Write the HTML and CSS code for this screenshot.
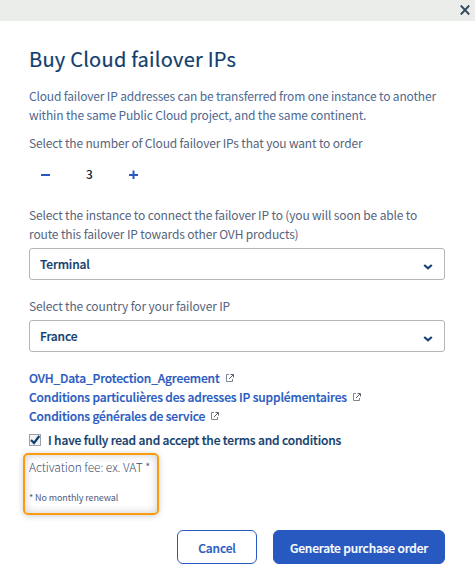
FILE: index.html
```html
<!DOCTYPE html>
<html lang="en">
<head>
<meta charset="utf-8">
<title>Buy Cloud failover IPs</title>
<link rel="stylesheet" href="styles.css">
</head>
<body>
<svg class="defs" width="0" height="0" aria-hidden="true">
  <symbol id="ext" viewBox="0 0 10 10"><path d="M4 1.5H1.5V8.5H7.5V6" fill="none" stroke="#7d8792" stroke-width="1"/><path d="M4 6 8 2M5.5 1.5H8.5V4.5" fill="none" stroke="#59606b" stroke-width="1"/></symbol>
  <symbol id="chev" viewBox="0 0 10 6"><path d="M1.2 1 5 4.3 8.8 1" fill="none" stroke="#174276" stroke-width="2.2"/></symbol>
</svg>
<header class="topbar"><svg class="close" viewBox="0 0 10 10"><path d="M.8.5 9.2 9.5M9.2.5.8 9.5" stroke="#34495e" stroke-width="1.9"/></svg></header>
<main class="dialog">
  <h1 class="title">Buy Cloud failover IPs</h1>
  <p class="text intro">Cloud failover IP addresses can be transferred from one instance to another<br>within the same Public Cloud project, and the same continent.</p>
  <p class="text label quantity-label">Select the number of Cloud failover IPs that you want to order</p>
  <div class="stepper"><svg class="sign" viewBox="0 0 9 9"><path d="M0 5H9" stroke="#2859c0" stroke-width="2"/></svg><span class="count">3</span><svg class="sign" viewBox="0 0 9 9"><path d="M0 5H9M4.5 .5V9" stroke="#2859c0" stroke-width="2"/></svg></div>
  <p class="text label instance-label">Select the instance to connect the failover IP to (you will soon be able to<br>route this failover IP towards other OVH products)</p>
  <div class="select"><span>Terminal</span><svg class="chev"><use href="#chev"/></svg></div>
  <p class="text label country-label">Select the country for your failover IP</p>
  <div class="select"><span>France</span><svg class="chev"><use href="#chev"/></svg></div>
  <div class="links">
    <a class="link"><span>OVH_Data_Protection_Agreement</span><svg class="ext"><use href="#ext"/></svg></a>
    <a class="link"><span>Conditions particulières des adresses IP supplémentaires</span><svg class="ext"><use href="#ext"/></svg></a>
    <a class="link"><span>Conditions générales de service</span><svg class="ext"><use href="#ext"/></svg></a>
  </div>
  <div class="terms"><span class="box"><svg class="tick" viewBox="0 0 10 10"><path d="M1 5 4 8 9.3 1" fill="none" stroke="#123f6d" stroke-width="2.2"/></svg></span><span>I have fully read and accept the terms and conditions</span></div>
  <section class="fees"><p class="fee">Activation fee: ex. VAT *</p><p class="note">* No monthly renewal</p></section>
  <footer class="actions"><button class="btn cancel">Cancel</button><button class="btn primary">Generate purchase order</button></footer>
</main>
</body>
</html>
```
FILE: styles.css
```css
* { box-sizing: border-box; }
body { margin: 0; background: #fff; font-family: "Noto Sans CJK JP", "Open Sans", sans-serif; color: #4d5c7d; }
h1, p { margin: 0; font-weight: 400; white-space: nowrap; }
.defs { position: absolute; }
.topbar { height: 21px; background: #ebedea; display: flex; justify-content: flex-end; padding: 5px 5px 0 0; }
.close { width: 10px; height: 10px; }
.dialog { padding: 23px 30px 0 29px; }
.title { font-size: 20px; line-height: 30px; color: #113e6e; letter-spacing: .25px; -webkit-text-stroke: .2px; }
.text { font-size: 12px; line-height: 19px; letter-spacing: -.16px; }
.intro { margin-top: 12px; color: #4d6992; }
.label { color: #56647d; }
.quantity-label { margin-top: 9px; }
.instance-label, .country-label { letter-spacing: -.14px; }
.stepper { display: flex; align-items: center; height: 20px; margin-top: 12px; padding-left: 12px; }
.sign { width: 9px; height: 9px; }
.count { width: 79px; text-align: center; font-size: 12px; font-weight: 500; line-height: 20px; color: #0c1d35; }
.instance-label { margin-top: 21px; }
.select { margin-top: 5px; height: 32px; border: 1px solid #b5b5b5; border-radius: 3px; display: flex; align-items: center; justify-content: space-between; padding: 0 11px 0 10px; font-size: 12px; font-weight: 500; -webkit-text-stroke: .2px; letter-spacing: -.14px; color: #113e6e; }
.select span { margin-top: -1px; }
.chev { width: 10px; height: 6px; margin-top: 5px; }
.country-label { margin-top: 16px; }
.links { margin-top: 16px; }
.link { display: flex; align-items: center; gap: 5px; height: 19px; font-size: 12px; font-weight: 500; -webkit-text-stroke: .2px; letter-spacing: -.15px; color: #2859c0; white-space: nowrap; }
.ext { width: 10px; height: 10px; margin-top: 1px; }
.terms { display: flex; align-items: center; height: 19px; margin-top: 5px; gap: 7px; font-size: 12px; font-weight: 500; -webkit-text-stroke: .2px; letter-spacing: -.15px; color: #113e6e; white-space: nowrap; }
.box { width: 12px; height: 12px; border: 1px solid #9aa1aa; background: #f1f3f5; display: flex; }
.tick { width: 10px; height: 10px; }
.fees { width: 136px; height: 62px; margin: 4px 0 0 -6px; padding: 2px 0 0 4px; border: 2px solid #fb9b0e; border-radius: 5px; box-shadow: 0 1px 6px #0003, inset 0 0 8px #0003; }
.fee { font-size: 12px; font-weight: 300; line-height: 20px; color: #3f5074; letter-spacing: -.1px; }
.note { font-size: 9px; line-height: 14px; margin-top: 14px; letter-spacing: -.1px; }
.actions { display: flex; justify-content: flex-end; gap: 16px; margin-top: 15px; }
.btn { height: 34px; border: 1px solid #2859c0; border-radius: 6px; padding: 0; font: 500 12px "Noto Sans CJK JP", "Open Sans", sans-serif; -webkit-text-stroke: .2px; letter-spacing: -.16px; white-space: nowrap; }
.cancel { width: 80px; background: #fff; color: #2859c0; }
.primary { width: 172px; background: #2859c0; color: #fff; }
```
